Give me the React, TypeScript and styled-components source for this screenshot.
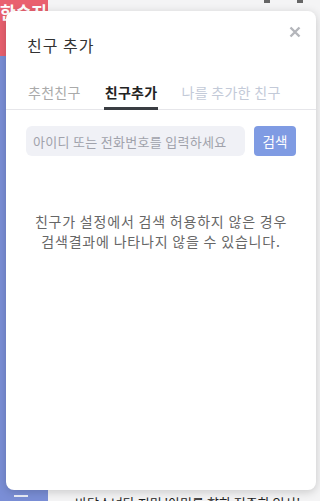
import React from "react";
import styled, { createGlobalStyle } from "styled-components";

const Global = createGlobalStyle`
  html, body { margin: 0; padding: 0; }
  body {
    width: 320px; height: 501px; overflow: hidden;
    font-family: "Noto Sans CJK KR", "Noto Sans", sans-serif;
    background: #f4f4f5;
  }
`;

const Page = styled.div`
  display: grid;
  grid-template-columns: 48px 1fr;
  width: 320px;
  height: 501px;
  position: relative;
`;

const Sidebar = styled.div`
  display: flex;
  flex-direction: column;
  background: #7a8ed6;
`;

const Brand = styled.div`
  height: 56px;
  background: #e9606f;
  color: #fff;
  font-weight: 700;
  font-size: 17px;
  line-height: 22px;
  padding: 1px 0 0;
  box-sizing: border-box;
  overflow: hidden;
  white-space: nowrap;
`;

const SideSpacer = styled.div`
  flex: 1;
`;

const Burger = styled.div`
  display: flex;
  flex-direction: column;
  gap: 5px;
  padding: 0 0 4px 14px;
  & > span { display: block; width: 14px; height: 2px; background: #fff; opacity: 0.85; }
`;

const Main = styled.div`
  display: flex;
  flex-direction: column;
  justify-content: space-between;
  background: #f4f4f5;
`;

const TopBar = styled.div`
  display: flex;
  justify-content: flex-end;
  gap: 27px;
  padding-right: 17px;
  & > span { width: 6px; height: 3px; background: #666; }
`;

const FooterText = styled.div`
  font-size: 13px;
  color: #222;
  padding-left: 27px;
  white-space: nowrap;
  height: 8px;
  line-height: 20px;
  overflow: hidden;
`;

const Modal = styled.div`
  position: absolute;
  left: 6px;
  top: 11px;
  width: 310px;
  height: 479px;
  background: #fff;
  border-radius: 8px;
  box-shadow: 0 2px 10px rgba(0, 0, 0, 0.18);
  display: flex;
  flex-direction: column;
`;

const Header = styled.div`
  box-sizing: border-box;
  height: 63px;
  display: flex;
  justify-content: space-between;
  align-items: flex-start;
  padding: 14px 14px 0 21px;
`;

const Title = styled.h2`
  margin: 8px 0 0;
  font-size: 16px;
  line-height: 24px;
  font-weight: 400;
  color: #333;
  letter-spacing: 1px;
`;

const Close = styled.button`
  border: 0;
  background: none;
  padding: 0;
  width: 14px;
  height: 14px;
  cursor: pointer;
  display: flex;
  align-items: center;
  justify-content: center;
`;

const Tabs = styled.div`
  display: flex;
  gap: 22px;
  padding: 8px 0 0 21px;
  border-bottom: 1px solid #e6e6ea;
`;

const Tab = styled.div<{ $active?: boolean; $muted?: boolean }>`
  font-size: 14px;
  line-height: 20px;
  letter-spacing: 0.3px;
  padding: 0 1px 5px;
  color: ${(p) => (p.$active ? "#222" : p.$muted ? "#c3cad8" : "#aaa")};
  font-weight: ${(p) => (p.$active ? 700 : 400)};
  border-bottom: 3px solid ${(p) => (p.$active ? "#3a3d42" : "transparent")};
  margin-bottom: -1px;
`;

const SearchRow = styled.div`
  display: flex;
  gap: 9px;
  padding: 16px 20px 0 20px;
`;

const Input = styled.input`
  flex: 1;
  height: 30px;
  box-sizing: border-box;
  border: 0;
  border-radius: 6px;
  background: #f0f1f6;
  padding: 0 7px;
  font-family: inherit;
  font-size: 13px;
  letter-spacing: 0.3px;
  color: #333;
  outline: none;
  &::placeholder { color: #a0a2ab; }
`;

const SearchButton = styled.button`
  width: 42px;
  height: 30px;
  border: 0;
  border-radius: 4px;
  background: #7f9be3;
  color: #fff;
  font-family: inherit;
  font-size: 13.5px;
  padding: 0;
`;

const Notice = styled.p`
  margin: 55px 0 0;
  text-align: center;
  font-size: 14px;
  line-height: 20px;
  letter-spacing: 0.8px;
  color: #666;
`;

export default function App() {
  return (
    <>
      <Global />
      <Page>
        <Sidebar>
          <Brand>한승지</Brand>
          <SideSpacer />
          <Burger><span /><span /></Burger>
        </Sidebar>
        <Main>
          <TopBar><span /><span /></TopBar>
          <FooterText>바탕소녀다 지미 '아미를 향한 전주한 인사'</FooterText>
        </Main>
        <Modal>
          <Header>
            <Title>친구 추가</Title>
            <Close aria-label="닫기">
              <svg width="12" height="12" viewBox="0 0 12 12">
                <path d="M1.5 1.5 L10.5 10.5 M10.5 1.5 L1.5 10.5" stroke="#b4b6bb" strokeWidth="2.4" strokeLinecap="butt" />
              </svg>
            </Close>
          </Header>
          <Tabs>
            <Tab>추천친구</Tab>
            <Tab $active>친구추가</Tab>
            <Tab $muted>나를 추가한 친구</Tab>
          </Tabs>
          <SearchRow>
            <Input placeholder="아이디 또는 전화번호를 입력하세요" />
            <SearchButton>검색</SearchButton>
          </SearchRow>
          <Notice>
            친구가 설정에서 검색 허용하지 않은 경우<br />
            검색결과에 나타나지 않을 수 있습니다.
          </Notice>
        </Modal>
      </Page>
    </>
  );
}
